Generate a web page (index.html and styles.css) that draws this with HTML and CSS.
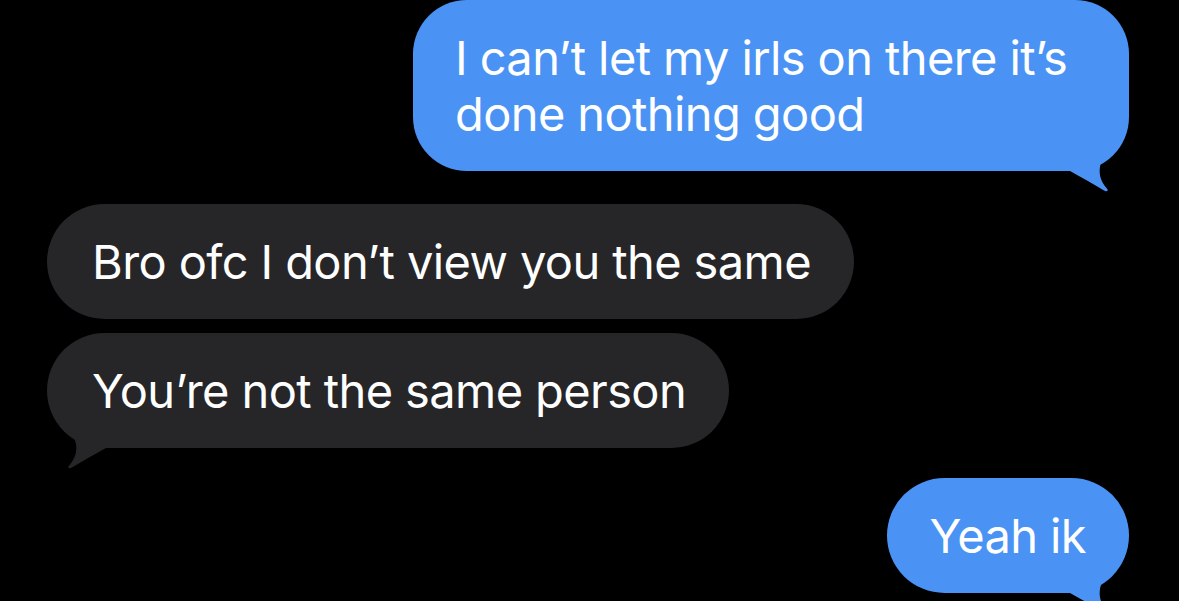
FILE: index.html
```html
<!DOCTYPE html>
<html lang="en">
<head>
<meta charset="utf-8">
<title>Messages</title>
<link rel="stylesheet" href="styles.css">
</head>
<body>
<div class="thread">
  <div class="bubble sent first">
    <svg class="tail tail-right" viewBox="-70 -60 72 82" width="72" height="82" aria-hidden="true"><path d="M-66 -2 L-59 0 C-48 6 -36 13 -25 19.5 C-22 21.5 -20 19.5 -22.5 17 C-29 10 -30 2 -29 -4 C-27 -18 -8 -28 -2 -52 L-66 -52 Z"/></svg>
    <span class="text">I can’t let my irls on there it’s done nothing good</span>
  </div>
  <div class="bubble received grouped"><span class="text">Bro ofc I don’t view you the same</span></div>
  <div class="bubble received last">
    <svg class="tail tail-left" viewBox="-70 -60 72 82" width="72" height="82" aria-hidden="true"><path d="M-66 -2 L-59 0 C-48 6 -36 13 -25 19.5 C-22 21.5 -20 19.5 -22.5 17 C-29 10 -30 2 -29 -4 C-27 -18 -8 -28 -2 -52 L-66 -52 Z"/></svg>
    <span class="text">You’re not the same person</span>
  </div>
  <div class="bubble sent second">
    <svg class="tail tail-right" viewBox="-70 -60 72 82" width="72" height="82" aria-hidden="true"><path d="M-66 -2 L-59 0 C-48 6 -36 13 -25 19.5 C-22 21.5 -20 19.5 -22.5 17 C-29 10 -30 2 -29 -4 C-27 -18 -8 -28 -2 -52 L-66 -52 Z"/></svg>
    <span class="text">Yeah ik</span>
  </div>
</div>
</body>
</html>
```

FILE: styles.css
```css
html, body {
  margin: 0;
  padding: 0;
  background: #000;
  height: 100%;
  overflow: hidden;
}

.thread {
  display: flex;
  flex-direction: column;
  font-family: Inter, "Noto Sans", "Liberation Sans", sans-serif;
  font-size: 47px;
  line-height: 56px;
  letter-spacing: -0.6px;
  color: #fff;
}

.bubble {
  position: relative;
  box-sizing: border-box;
  max-width: 716px;
  padding: 30px 43px 29px 42px;
  border-radius: 58px;
}

.text {
  position: relative;
}

.sent {
  align-self: flex-end;
  margin-right: 50px;
  background: #4a93f4;
  fill: #4a93f4;
}

.received {
  align-self: flex-start;
  margin-left: 47px;
  padding-left: 45px;
  background: #262629;
  fill: #262629;
  max-width: 900px;
}

.first {
  margin-top: 0;
  border-radius: 54px;
}

.grouped {
  margin-top: 33px;
}

.last {
  margin-top: 14px;
}

.second {
  margin-top: 30px;
}

.tail {
  position: absolute;
  bottom: -22px;
  display: block;
}

.tail-right {
  right: -2px;
}

.tail-left {
  left: -2px;
  transform: scaleX(-1);
}
```
